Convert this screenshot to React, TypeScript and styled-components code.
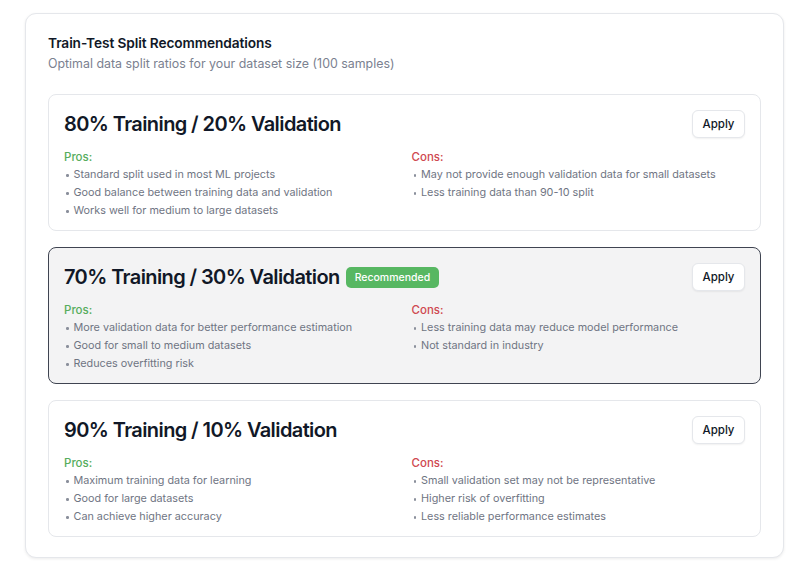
import * as React from "react";
import styled, { createGlobalStyle } from "styled-components";

const GlobalStyle = createGlobalStyle`
    html, body {
        margin: 0;
        padding: 0;
        background: #ffffff;
        font-family: Inter, "Noto Sans", "Liberation Sans", sans-serif;
        -webkit-font-smoothing: antialiased;
    }
`;

const Page = styled.div`
    padding: 13px 19px 15px 25px;
`;

const Panel = styled.section`
    border: 1px solid #e5e7eb;
    border-radius: 11px;
    background: #ffffff;
    box-shadow: 0 1px 3px rgba(0, 0, 0, 0.08);
    padding: 19px 22px 20px 22px;
`;

const PanelTitle = styled.h2`
    margin: 0;
    font-size: 13.7px;
    line-height: 20px;
    font-weight: 600;
    color: #111827;
    letter-spacing: -0.1px;
`;

const PanelSubtitle = styled.p`
    margin: 2px 0 0 0;
    font-size: 12.4px;
    line-height: 18px;
    color: #7b8190;
`;

const CardList = styled.div`
    display: flex;
    flex-direction: column;
    gap: 16px;
    margin-top: 21px;
`;

const Card = styled.div<{ $active?: boolean }>`
    border: 1px solid ${p => (p.$active ? "#3f4451" : "#e5e7eb")};
    background: ${p => (p.$active ? "#f3f3f4" : "#ffffff")};
    border-radius: 8px;
    padding: 15px 15px 10px 15px;
`;

const CardHeader = styled.div`
    display: flex;
    align-items: center;
    justify-content: space-between;
    height: 28px;
`;

const HeadingRow = styled.div`
    display: flex;
    align-items: center;
    gap: 6px;
`;

const Heading = styled.h3`
    margin: 0;
    font-size: 20px;
    line-height: 28px;
    font-weight: 600;
    color: #111827;
    letter-spacing: -0.6px;
`;

const Badge = styled.span`
    display: inline-flex;
    align-items: center;
    height: 21px;
    padding: 0 9px;
    border-radius: 5px;
    background: #57b762;
    color: #ffffff;
    font-size: 10.5px;
    font-weight: 500;
`;

const ApplyButton = styled.button`
    height: 28px;
    width: 53px;
    border: 1px solid #e5e7eb;
    border-radius: 6px;
    background: #ffffff;
    box-shadow: 0 1px 2px rgba(0, 0, 0, 0.06);
    font-family: inherit;
    font-size: 11.5px;
    font-weight: 500;
    color: #111827;
    cursor: pointer;
`;

const Columns = styled.div`
    display: grid;
    grid-template-columns: 1fr 1fr;
    gap: 14px;
    margin-top: 10px;
`;

const Label = styled.div<{ $tone: "pro" | "con" }>`
    font-size: 11.5px;
    line-height: 18px;
    font-weight: 500;
    color: ${p => (p.$tone === "pro" ? "#57ad5d" : "#cf4850")};
`;

const Items = styled.ul`
    margin: 0;
    padding: 0;
    list-style: none;
`;

const Item = styled.li`
    display: flex;
    align-items: center;
    gap: 4px;
    height: 18px;
    font-size: 10.8px;
    line-height: 18px;
    color: #6f7583;

    &::before {
        content: "";
        width: 2.5px;
        height: 2.5px;
        border-radius: 50%;
        background: #8a8f9b;
        margin: 1px 1px 0 2px;
    }
`;

type Split = {
    title: string;
    recommended?: boolean;
    pros: string[];
    cons: string[];
};

const splits: Split[] = [
    {
        title: "80% Training / 20% Validation",
        pros: [
            "Standard split used in most ML projects",
            "Good balance between training data and validation",
            "Works well for medium to large datasets",
        ],
        cons: [
            "May not provide enough validation data for small datasets",
            "Less training data than 90-10 split",
        ],
    },
    {
        title: "70% Training / 30% Validation",
        recommended: true,
        pros: [
            "More validation data for better performance estimation",
            "Good for small to medium datasets",
            "Reduces overfitting risk",
        ],
        cons: [
            "Less training data may reduce model performance",
            "Not standard in industry",
        ],
    },
    {
        title: "90% Training / 10% Validation",
        pros: [
            "Maximum training data for learning",
            "Good for large datasets",
            "Can achieve higher accuracy",
        ],
        cons: [
            "Small validation set may not be representative",
            "Higher risk of overfitting",
            "Less reliable performance estimates",
        ],
    },
];

const SplitCard = ({ split }: { split: Split }) => (
    <Card $active={split.recommended}>
        <CardHeader>
            <HeadingRow>
                <Heading>{split.title}</Heading>
                {split.recommended && <Badge>Recommended</Badge>}
            </HeadingRow>
            <ApplyButton>Apply</ApplyButton>
        </CardHeader>
        <Columns>
            <div>
                <Label $tone="pro">Pros:</Label>
                <Items>
                    {split.pros.map(p => <Item key={p}>{p}</Item>)}
                </Items>
            </div>
            <div>
                <Label $tone="con">Cons:</Label>
                <Items>
                    {split.cons.map(c => <Item key={c}>{c}</Item>)}
                </Items>
            </div>
        </Columns>
    </Card>
);

const App = () => (
    <>
        <GlobalStyle />
        <Page>
            <Panel>
                <PanelTitle>Train-Test Split Recommendations</PanelTitle>
                <PanelSubtitle>Optimal data split ratios for your dataset size (100 samples)</PanelSubtitle>
                <CardList>
                    {splits.map(s => <SplitCard key={s.title} split={s} />)}
                </CardList>
            </Panel>
        </Page>
    </>
);

export default App;
